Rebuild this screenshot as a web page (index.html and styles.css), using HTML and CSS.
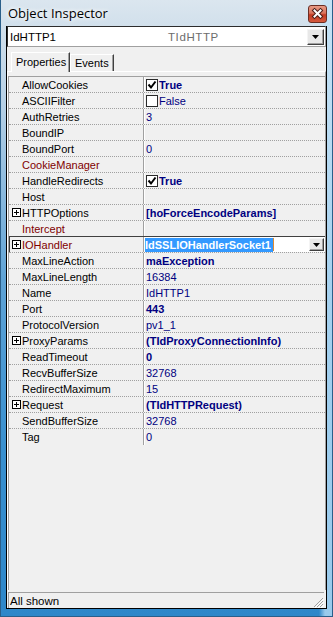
FILE: index.html
```html
<!DOCTYPE html>
<html lang="en">
<head>
    <meta charset="UTF-8">
    <title>Object Inspector</title>
    <link rel="stylesheet" href="styles.css">
</head>
<body>
    <div class="window">
        <div class="titlebar">
            <span class="title">Object Inspector</span>
            <span class="close-btn">
                <svg width="19" height="18" viewBox="0 0 19 18">
                    <path d="M6.5 5.5 L12.5 11.5 M12.5 5.5 L6.5 11.5" stroke="#4a1e18" stroke-width="4" stroke-linecap="square" fill="none"/>
                    <path d="M6.5 5.5 L12.5 11.5 M12.5 5.5 L6.5 11.5" stroke="#fff" stroke-width="2" stroke-linecap="square" fill="none"/>
                </svg>
            </span>
        </div>

        <div class="client">
            <!-- selector de componente -->
            <div class="combo">
                <span class="combo-name">IdHTTP1</span>
                <span class="combo-type">TIdHTTP</span>
                <span class="drop-btn">
                    <svg width="7" height="4" viewBox="0 0 7 4"><path d="M0 0 H7 L3.5 4 Z" fill="#000"/></svg>
                </span>
            </div>

            <div class="tabs">
                <div class="tab tab-props active">Properties</div>
                <div class="tab tab-events">Events</div>
            </div>

            <div class="sheet">
                <div class="grid">
                    <div class="row"><div class="name">AllowCookies</div><div class="value bold"><span class="check"><svg width="10" height="10" viewBox="0 0 10 10"><path d="M1.5 4.5 L4 7.5 L8.5 1.5" stroke="#000" stroke-width="2" fill="none"/></svg></span>True</div></div>
                    <div class="row"><div class="name">ASCIIFilter</div><div class="value"><span class="check"></span>False</div></div>
                    <div class="row"><div class="name">AuthRetries</div><div class="value">3</div></div>
                    <div class="row"><div class="name">BoundIP</div><div class="value"></div></div>
                    <div class="row"><div class="name">BoundPort</div><div class="value">0</div></div>
                    <div class="row"><div class="name ref">CookieManager</div><div class="value"></div></div>
                    <div class="row"><div class="name">HandleRedirects</div><div class="value bold"><span class="check"><svg width="10" height="10" viewBox="0 0 10 10"><path d="M1.5 4.5 L4 7.5 L8.5 1.5" stroke="#000" stroke-width="2" fill="none"/></svg></span>True</div></div>
                    <div class="row"><div class="name">Host</div><div class="value"></div></div>
                    <div class="row"><div class="name"><span class="plus"></span>HTTPOptions</div><div class="value bold">[hoForceEncodeParams]</div></div>
                    <div class="row above-selected"><div class="name ref">Intercept</div><div class="value"></div></div>
                    <div class="row selected">
                        <div class="name ref"><span class="plus"></span>IOHandler</div>
                        <div class="value">
                            <div class="edit">
                                <span class="edit-text">IdSSLIOHandlerSocket1</span>
                                <span class="caret"></span>
                                <span class="drop-btn small">
                                    <svg width="7" height="4" viewBox="0 0 7 4"><path d="M0 0 H7 L3.5 4 Z" fill="#000"/></svg>
                                </span>
                            </div>
                        </div>
                    </div>
                    <div class="row"><div class="name">MaxLineAction</div><div class="value bold">maException</div></div>
                    <div class="row"><div class="name">MaxLineLength</div><div class="value">16384</div></div>
                    <div class="row"><div class="name">Name</div><div class="value">IdHTTP1</div></div>
                    <div class="row"><div class="name">Port</div><div class="value bold">443</div></div>
                    <div class="row"><div class="name">ProtocolVersion</div><div class="value">pv1_1</div></div>
                    <div class="row"><div class="name"><span class="plus"></span>ProxyParams</div><div class="value bold">(TIdProxyConnectionInfo)</div></div>
                    <div class="row"><div class="name">ReadTimeout</div><div class="value bold">0</div></div>
                    <div class="row"><div class="name">RecvBufferSize</div><div class="value">32768</div></div>
                    <div class="row"><div class="name">RedirectMaximum</div><div class="value">15</div></div>
                    <div class="row"><div class="name"><span class="plus"></span>Request</div><div class="value bold">(TIdHTTPRequest)</div></div>
                    <div class="row"><div class="name">SendBufferSize</div><div class="value">32768</div></div>
                    <div class="row last"><div class="name">Tag</div><div class="value">0</div></div>
                </div>
            </div>

            <div class="status">
                <span>All shown</span>
                <svg class="grip" width="11" height="11" viewBox="0 0 11 11">
                    <path d="M10 1 L1 10 M10 4 L4 10 M10 7 L7 10" stroke="#a0a0a0" stroke-width="1" fill="none"/>
                    <path d="M11 2 L2 11 M11 5 L5 11 M11 8 L8 11" stroke="#fff" stroke-width="1" fill="none"/>
                </svg>
            </div>
        </div>
    </div>
</body>
</html>
```

FILE: styles.css
```css
html, body {
    margin: 0;
    padding: 0;
    font-family: 'Liberation Sans', Arial, sans-serif;
    font-size: 11px;
    color: #000;
}

.window {
    width: 333px;
    height: 617px;
    box-sizing: border-box;
    padding: 0 5px 7px 5px;
    border: 1px solid #2a5f8a;
    border-top: none;
    display: flex;
    flex-direction: column;
    background:
        linear-gradient(to right, rgba(255,255,255,0) 0, rgba(255,255,255,0) 318px, rgba(190,225,248,0.75) 324px),
        linear-gradient(to bottom, #dbe6ef 0, #d0dfeb 30px, #b4cfe5 110px, #5fa3d6 280px, #3990cf 450px, #2e87c9 617px);
}

.titlebar {
    height: 26px;
    display: flex;
    justify-content: space-between;
    align-items: flex-start;
    padding-left: 2px;
}

.title {
    font-family: 'Open Sans', 'Noto Sans', sans-serif;
    font-size: 13px;
    margin-top: 4px;
    color: #000;
    text-shadow: 0 0 6px #fff, 0 0 4px #fff;
}

.close-btn {
    margin-top: 5px;
    width: 19px;
    height: 18px;
    box-sizing: border-box;
    border: 1px solid #6b2e24;
    border-radius: 3px;
    background: linear-gradient(to bottom, #e89a86 0, #d9735c 45%, #c23a22 55%, #d55a3e 100%);
    display: flex;
}

.close-btn svg {
    margin: -1px;
}

.client {
    flex: 1;
    border: 1px solid #000;
    border-top: none;
    background: #f0f0f0;
    display: flex;
    flex-direction: column;
    min-height: 0;
}

/* combo del componente */
.combo {
    height: 21px;
    box-sizing: border-box;
    border: 1px solid;
    border-color: #2c2c2c #a0a0a0 #a0a0a0 #2c2c2c;
    background: #fff;
    display: flex;
    align-items: center;
    padding-left: 2px;
    font-size: 11.5px;
}

.combo-name {
    width: 158px;
}

.combo-type {
    color: #6d6d6d;
    letter-spacing: 0.6px;
}

.drop-btn {
    margin-left: auto;
    margin-right: 1px;
    width: 17px;
    height: 16px;
    box-sizing: border-box;
    border: 1px solid;
    border-color: #f4f4f4 #404040 #404040 #f4f4f4;
    box-shadow: inset -1px -1px 0 #a0a0a0;
    background: #e8e8e8;
    display: flex;
    align-items: center;
    justify-content: center;
}

.drop-btn.small {
    width: 15px;
    height: 13px;
}

.tabs {
    margin-top: 3px;
    height: 21px;
    display: flex;
    align-items: flex-end;
    padding-left: 4px;
}

.tab {
    box-sizing: border-box;
    border-top: 1px solid #fff;
    border-left: 1px solid #fff;
    border-right: 1px solid #404040;
    box-shadow: inset -1px 0 0 #a0a0a0;
    padding-left: 4px;
    line-height: 15px;
}

.tab-props {
    width: 59px;
    height: 19px;
    padding-top: 2px;
}

.tab-events {
    width: 44px;
    height: 17px;
    padding-top: 1px;
}

.sheet {
    flex: 1;
    border-top: 1px solid #fff;
    border-left: 1px solid #fff;
    border-right: 1px solid #a0a0a0;
    padding-top: 4px;
    margin-bottom: 2px;
    display: flex;
    flex-direction: column;
    min-height: 0;
}

.tabs .active {
    position: relative;
    top: 1px;
    background: #f0f0f0;
    height: 20px;
}

.grid {
    flex: 1;
    border-top: 1px solid #a0a0a0;
    border-left: 1px solid #a0a0a0;
    overflow: hidden;
}

.row {
    height: 16px;
    box-sizing: border-box;
    border-bottom: 1px dotted #a0a0a0;
    display: flex;
}

.row.last {
    border-bottom: none;
}

.row.above-selected {
    border-bottom: 1px solid #404040;
}

.row.selected {
    box-shadow: inset 1px 0 0 #404040;
}

.name {
    width: 135px;
    box-sizing: border-box;
    border-right: 1px solid #a0a0a0;
    padding-left: 13px;
    display: flex;
    align-items: center;
    white-space: nowrap;
}

.name.ref {
    color: #800000;
}

.value {
    flex: 1;
    border-left: 1px solid #fff;
    padding-left: 1px;
    display: flex;
    align-items: center;
    color: #000080;
    white-space: nowrap;
}

.value.bold {
    font-weight: bold;
}

.plus {
    width: 9px;
    height: 9px;
    box-sizing: border-box;
    border: 1px solid #000;
    margin-left: -10px;
    margin-right: 1px;
    background:
        linear-gradient(#000, #000) center / 5px 1px no-repeat,
        linear-gradient(#000, #000) center / 1px 5px no-repeat,
        #fff;
}

.check {
    width: 12px;
    height: 12px;
    box-sizing: border-box;
    border: 1px solid #2a2a2a;
    background: #fff;
    margin-right: 1px;
    display: flex;
    align-items: center;
    justify-content: center;
}

.edit {
    flex: 1;
    align-self: stretch;
    margin-left: -2px;
    background: #fff;
    display: flex;
    align-items: center;
}

.edit-text {
    margin-left: 1px;
    background: #3399ff;
    color: #fff;
    font-weight: bold;
    line-height: 14px;
    padding-right: 2px;
}

.caret {
    width: 1px;
    height: 13px;
    background: #e08a30;
}

.edit .drop-btn {
    margin-right: 1px;
}

.status {
    height: 16px;
    box-sizing: border-box;
    margin: 0 2px 0 1px;
    border-top: 1px solid #a0a0a0;
    border-left: 1px solid #a0a0a0;
    padding-left: 1px;
    display: flex;
    align-items: center;
    justify-content: space-between;
    font-size: 11.5px;
}

.grip {
    align-self: flex-end;
}
```
